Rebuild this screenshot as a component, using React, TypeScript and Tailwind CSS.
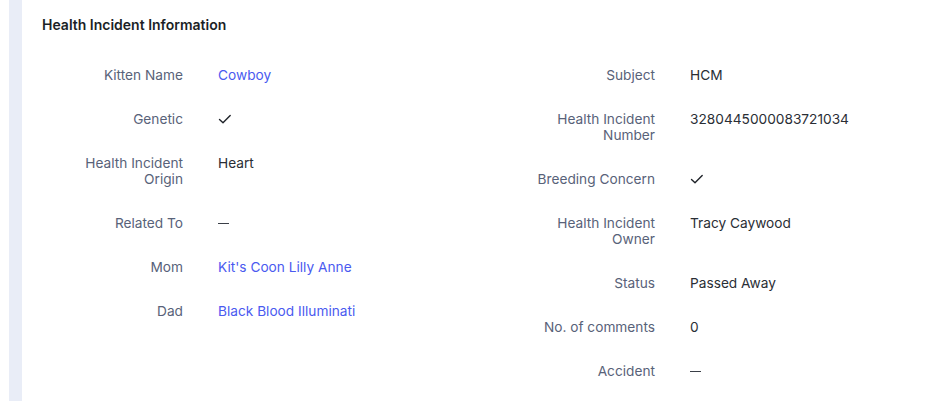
import React from "react";

type Val = { text?: string; kind?: "link" | "text" | "check" | "dash" };
type Row = { label: string; value: Val };

const left: Row[] = [
  { label: "Kitten Name", value: { text: "Cowboy", kind: "link" } },
  { label: "Genetic", value: { kind: "check" } },
  { label: "Health Incident Origin", value: { text: "Heart" } },
  { label: "Related To", value: { kind: "dash" } },
  { label: "Mom", value: { text: "Kit's Coon Lilly Anne", kind: "link" } },
  { label: "Dad", value: { text: "Black Blood Illuminati", kind: "link" } },
];

const right: Row[] = [
  { label: "Subject", value: { text: "HCM" } },
  { label: "Health Incident Number", value: { text: "3280445000083721034" } },
  { label: "Breeding Concern", value: { kind: "check" } },
  { label: "Health Incident Owner", value: { text: "Tracy Caywood" } },
  { label: "Status", value: { text: "Passed Away" } },
  { label: "No. of comments", value: { text: "0" } },
  { label: "Accident", value: { kind: "dash" } },
];

function Check() {
  return (
    <svg width="14" height="16" viewBox="0 0 14 16" className="block">
      <path d="M1.5 8.5 L5 11.8 L12.2 4.6" fill="none" stroke="#1f2329" strokeWidth="1.4" strokeLinecap="round" strokeLinejoin="round" />
    </svg>
  );
}

function Value({ v }: { v: Val }) {
  if (v.kind === "check") return <Check />;
  if (v.kind === "dash")
    return (
      <div className="h-4 flex items-center pt-[1px]">
        <div className="w-[11px] h-[1px] bg-[#3a3f47]" />
      </div>
    );
  if (v.kind === "link") return <span className="text-[#4a5af0]">{v.text}</span>;
  return <span className="text-[#2a2e35]">{v.text}</span>;
}

function Column({ rows }: { rows: Row[] }) {
  return (
    <div className="flex flex-col w-[472px] shrink-0">
      {rows.map((r) => (
        <div key={r.label} className="flex pb-[28px]">
          <div className="w-[141px] shrink-0 text-right text-[#586279] pl-[20px]">{r.label}</div>
          <div className="pl-[35px]">
            <Value v={r.value} />
          </div>
        </div>
      ))}
    </div>
  );
}

export default function App() {
  return (
    <div
      className="flex min-h-[401px] bg-white text-[13.7px] leading-4 overflow-hidden"
      style={{ fontFamily: "Inter, 'Noto Sans', sans-serif" }}
    >
      <div className="w-[9px] shrink-0" />
      <div className="w-[13px] shrink-0 bg-[#e9edf7]" />
      <div className="flex-1 pl-[20px] pt-[17px]">
        <h2 className="font-semibold text-[14px] text-[#1c1f26] leading-4">Health Incident Information</h2>
        <div className="flex mt-[34px]">
          <Column rows={left} />
          <Column rows={right} />
        </div>
      </div>
    </div>
  );
}
